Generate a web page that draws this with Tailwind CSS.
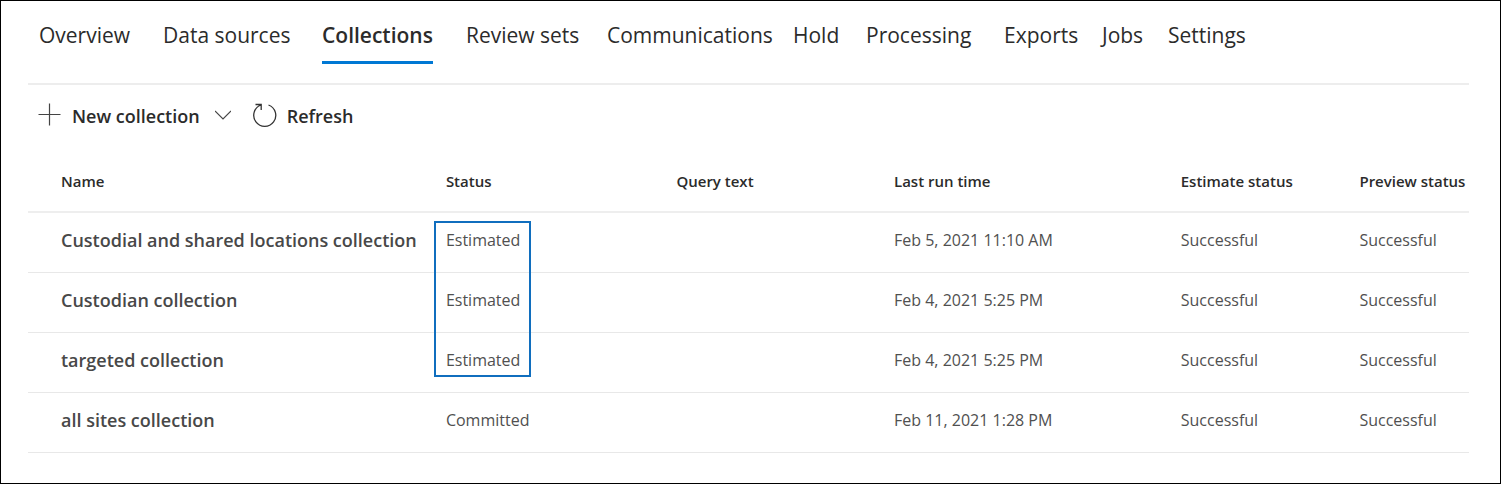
<!DOCTYPE html>
<html lang="en">
<head>
<meta charset="utf-8">
<title>Collections</title>
<script src="https://cdn.jsdelivr.net/npm/@tailwindcss/browser@4"></script>
</head>
<body class="bg-white">
<div class="min-h-screen border border-black pl-[27px] pr-[31px] font-['Open_Sans','Noto_Sans',sans-serif] text-[#2b2b2b]">
  <nav aria-label="Case sections" class="grid grid-cols-[124px_159px_144px_141px_186px_73px_138px_98px_66px_auto] justify-start border-b-2 border-[#ededed] pt-[18px] pb-[19px] pl-[11px] text-[21px] leading-8 whitespace-nowrap">
    <a href="#overview" class="justify-self-start">Overview</a>
    <a href="#data-sources" class="justify-self-start">Data sources</a>
    <a href="#collections" aria-current="page" class="justify-self-start border-b-3 border-[#0078d4] pb-[10px] font-semibold">Collections</a>
    <a href="#review-sets" class="justify-self-start">Review sets</a>
    <a href="#communications" class="justify-self-start">Communications</a>
    <a href="#hold" class="justify-self-start">Hold</a>
    <a href="#processing" class="justify-self-start">Processing</a>
    <a href="#exports" class="justify-self-start">Exports</a>
    <a href="#jobs" class="justify-self-start">Jobs</a>
    <a href="#settings" class="justify-self-start">Settings</a>
  </nav>
  <div class="flex items-center gap-[22px] pt-[15px] pb-5 pl-[10px] text-[18px] leading-8 font-semibold">
    <button type="button" class="flex items-center">
      <svg class="mr-[10px] mb-[2px] size-6" viewBox="0 0 24 24" fill="none" stroke="#444" stroke-width="1.2"><path d="M11.500 .5v22M.5 11.500h22"/></svg>
      New collection
      <svg class="ml-[15px] mb-[2px] size-4" viewBox="0 0 16 16" fill="none" stroke="#444" stroke-width="1.1"><path d="M0 4l8 8 8-8"/></svg>
    </button>
    <button type="button" class="flex items-center">
      <svg class="mr-[10px] mb-[2px] size-6" viewBox="0 0 24 24" fill="none" stroke="#333" stroke-width="1.3"><path d="M15.500 2A11 11 0 1 1 8 2L7.500 2.200M2.500 1.500H8.200V7"/></svg>
      Refresh
    </button>
  </div>
  <table class="w-full table-fixed text-left text-[16px] leading-[22px] whitespace-nowrap text-[#505050] [&_tbody_td]:pb-1 [&_tbody_th]:pb-1">
    <colgroup><col class="w-[29%]"><col class="w-[16%]"><col class="w-[15.1%]"><col class="w-[19.9%]"><col class="w-[12.4%]"><col></colgroup>
    <thead>
      <tr class="h-[60px] border-b-2 border-[#eeeeee] text-[15px] text-[#2b2b2b] [&>th]:pb-[2px] [&>th]:font-semibold">
        <th scope="col" class="pl-[33px]">Name</th><th scope="col">Status</th><th scope="col">Query text</th><th scope="col">Last run time</th><th scope="col">Estimate status</th><th scope="col">Preview status</th>
      </tr>
    </thead>
    <tbody>
      <tr class="h-[60px] border-b border-[#e8e8e8]">
        <th scope="row" class="pl-[33px] text-[18px] font-semibold text-[#484848]">Custodial and shared locations collection</th>
        <td class="relative">Estimated<span class="pointer-events-none absolute top-2 -left-3 h-[156px] w-[97px] border-2 border-[#106ebe]"></span></td>
        <td></td><td>Feb 5, 2021 11:10 AM</td><td>Successful</td><td>Successful</td>
      </tr>
      <tr class="h-[60px] border-b border-[#e8e8e8]">
        <th scope="row" class="pl-[33px] text-[18px] font-semibold text-[#484848]">Custodian collection</th>
        <td>Estimated</td><td></td><td>Feb 4, 2021 5:25 PM</td><td>Successful</td><td>Successful</td>
      </tr>
      <tr class="h-[60px] border-b border-[#e8e8e8]">
        <th scope="row" class="pl-[33px] text-[18px] font-semibold text-[#484848]">targeted collection</th>
        <td>Estimated</td><td></td><td>Feb 4, 2021 5:25 PM</td><td>Successful</td><td>Successful</td>
      </tr>
      <tr class="h-[60px] border-b border-[#e8e8e8]">
        <th scope="row" class="pl-[33px] text-[18px] font-semibold text-[#484848]">all sites collection</th>
        <td>Committed</td><td></td><td>Feb 11, 2021 1:28 PM</td><td>Successful</td><td>Successful</td>
      </tr>
    </tbody>
  </table>
</div>
</body>
</html>
